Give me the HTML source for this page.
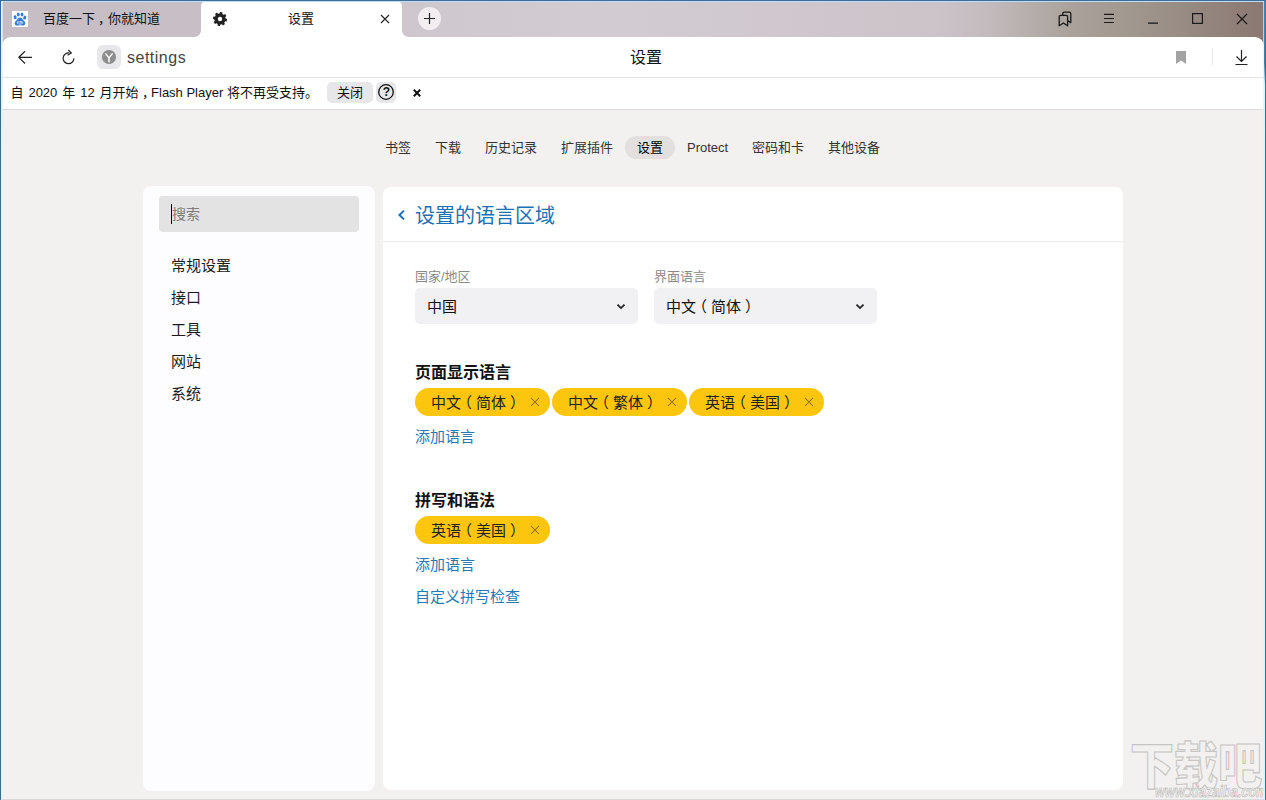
<!DOCTYPE html>
<html lang="zh-CN">
<head>
<meta charset="utf-8">
<title>设置</title>
<style>
*{box-sizing:border-box;margin:0;padding:0}
html,body{width:1266px;height:800px;overflow:hidden}
body{position:relative;background:#f2f1ef;font-family:"Liberation Sans","Noto Sans CJK SC",sans-serif;color:#000;font-size:14px}
.abs{position:absolute}
.t{position:absolute;white-space:nowrap;line-height:1}
#titlebar{left:0;top:0;width:1266px;height:45px;background:linear-gradient(90deg,#c7bec5 0px,#c8bfc6 200px,#cfc8cf 450px,#d2ccd2 600px,#cfc7cd 800px,#cbc3c8 940px,#c3babd 990px,#b6aeab 1030px,#aaa29b 1070px,#a29a91 1120px,#988c84 1180px,#908079 1230px,#8a7771 1266px)}
#tab1{left:2px;top:2px;width:199px;height:35px;background:transparent}
#tab2{left:201px;top:1px;width:201px;height:37px;background:#fff;border-radius:5px 5px 0 0}
#toolbar{left:2px;top:37px;width:1262px;height:41px;background:#fff;border-radius:9px 9px 0 0;border-bottom:1px solid #e4e4e4}
#infobar{left:2px;top:78px;width:1262px;height:32px;background:#fff;border-bottom:1px solid #dcdcdc}
#bl{left:0;top:0;width:1px;height:800px;background:linear-gradient(180deg,#2f6aa0 0,#356c96 60px,#3d6e88 140px,#3d6e88 100%)}
#bl2{left:1px;top:1px;width:2px;height:798px;background:linear-gradient(90deg,#d6f5ff 0,#d6f5ff 50%,rgba(228,240,250,.7) 50%)}
#bt{left:0;top:0;width:1266px;height:1px;background:#3e6e98}
#bt2{left:1px;top:1px;width:1264px;height:1px;background:#bcdcf8}
#br{left:1265px;top:0;width:1px;height:800px;background:linear-gradient(180deg,#3f78aa 0,#3d7096 60px,#3d6e88 140px,#3d6e88 100%)}
#br2{left:1263px;top:1px;width:1px;height:798px;background:rgba(228,240,250,.7)}
#br3{left:1264px;top:1px;width:1px;height:798px;background:linear-gradient(180deg,#4a86b5 0,#47809f 62px,#d6f5ff 84px,#d6f5ff 100%)}
#bb{left:2px;top:799px;width:1262px;height:1px;background:#dbdada}
#side{left:143px;top:186px;width:232px;height:605px;background:#fdfcfe;border-radius:8px}
#main{left:383px;top:187px;width:740px;height:603px;background:#fff;border-radius:8px}

.tx13{font-size:13px}
svg{position:absolute;overflow:visible}
#tabtxt1{left:43px;top:12px;font-size:13px;color:#111}
#tabtxt2{left:288px;top:12px;font-size:13px;color:#111}
#plus{left:418px;top:7px;width:23px;height:23px;border-radius:50%;background:#f1edf1}
#ybox{left:97px;top:45px;width:24px;height:24px;border-radius:6px;background:#e8e7e9}
#urltxt{left:127px;top:50px;font-size:16px;letter-spacing:.5px;color:#444}
#pgtitle{left:630px;top:50px;font-size:16px;color:#111}
#sep{left:1212px;top:48px;width:1px;height:17px;background:#e8e8e8}
#infotxt{left:10.5px;top:86px;font-size:13px;color:#111;word-spacing:1.3px}
#btnclose{left:327px;top:82px;width:46px;height:21px;border-radius:5px;background:#e7e6e8}
#btnclosetxt{left:337px;top:86px;font-size:13px;color:#111}
#btnq{left:376px;top:82px;width:20px;height:21px;border-radius:5px;background:#e7e6e8}
#qmark{left:382px;top:86px;font-size:12px;font-weight:bold;color:#111;width:9px;text-align:center}

.nav{font-size:13px;color:#333;top:141px}
#navpill{left:625px;top:136px;width:50px;height:23px;border-radius:12px;background:#e1e0df}
#search{left:159px;top:196px;width:200px;height:36px;border-radius:4px;background:#e4e3e3}
#caret{left:171px;top:204px;width:1px;height:20px;background:#000}
#searchtxt{left:172px;top:207px;font-size:14px;color:#7d7d7d}
.si{left:171px;font-size:15px;color:#1c1c1c}
#h1{left:415px;top:206px;font-size:20px;color:#1a71b4}
#divider{left:383px;top:241px;width:740px;height:1px;background:#ebebeb}
.lbl{font-size:13px;color:#8a8a8a;top:270px}
.sel{top:288px;width:223px;height:36px;border-radius:5px;background:#f1f0f2}
.seltxt{font-size:15px;color:#111;top:299px}
.h2{left:415px;font-size:16px;font-weight:bold;color:#111}
.chip{height:28px;border-radius:14px;background:#fcc60e}
.chiptxt{font-size:15px;color:#222}
.po{position:relative;left:-4px}.pc{position:relative;left:4px}
.lnk{left:415px;font-size:15px;color:#2a78b3}

#wm1{left:1130px;top:737px;font-size:44px;font-weight:900;color:#f2f1ef;-webkit-text-stroke:1px #c6c5c4;letter-spacing:0px;transform-origin:0 0;transform:scale(1.0,1.14);font-family:"Noto Sans CJK SC","Liberation Sans",sans-serif}
#wm2{left:1155px;top:784px;font-size:16px;font-weight:bold;font-style:italic;color:#f2f1ef;-webkit-text-stroke:0.7px #bdbcbb;transform-origin:0 0;transform:scale(0.8,1)}
</style>
</head>
<body>
<div id="titlebar" class="abs"></div>
<div id="tab1" class="abs"></div>
<div id="tab2" class="abs"></div>
<div id="toolbar" class="abs"></div>
<div id="infobar" class="abs"></div>

<!-- tab strip -->
<svg id="fav" style="left:12px;top:11px" width="16" height="16" viewBox="0 0 16 16">
<rect width="16" height="16" fill="#fff"/>
<ellipse cx="3.2" cy="6.3" rx="1.5" ry="2" fill="#3a7bd8" transform="rotate(-15 3.2 6.3)"/>
<ellipse cx="6.2" cy="3.5" rx="1.4" ry="2" fill="#3a7bd8"/>
<ellipse cx="10" cy="3.5" rx="1.4" ry="2" fill="#3a7bd8"/>
<ellipse cx="12.8" cy="6.6" rx="1.5" ry="2" fill="#3a7bd8" transform="rotate(15 12.8 6.6)"/>
<path d="M8 6.6c1.6 0 2.4 1.4 3.4 2.6 1 1.1 2.3 1.8 1.9 3.6-.4 1.7-2 1.8-3 1.7-.9-.1-1.500-.3-2.300-.3s-1.500.3-2.500.4c-1.200.1-2.500-.3-2.800-1.800-.3-1.700.9-2.500 1.900-3.500C5.600 8.100 6.300 6.600 8 6.600z" fill="#3a7bd8"/>
<ellipse cx="8" cy="11.7" rx="3.2" ry="1.7" fill="#dbe8fa"/>
<text x="8" y="13.1" font-size="4" font-weight="bold" text-anchor="middle" fill="#3a7bd8" font-family="Liberation Sans, sans-serif">du</text>
</svg>
<div id="tabtxt1" class="t">百度一下<span style="position:relative;left:3px">，</span>你就知道</div>
<svg style="left:194px;top:30px" width="7" height="7" viewBox="0 0 7 7"><path d="M0 7h7V0C7 4 4 7 0 7z" fill="#fff"/></svg>
<svg style="left:402px;top:30px" width="7" height="7" viewBox="0 0 7 7"><path d="M7 7H0V0c0 4 3 7 7 7z" fill="#fff"/></svg>
<svg style="left:213px;top:12px" width="14" height="14" viewBox="0 0 14 14"><path fill-rule="evenodd" fill="#222" d="M12.58 6.57 L14.10 7.01 L13.68 9.42 L12.10 9.31 L11.25 10.64 L12.01 12.03 L10.01 13.43 L8.97 12.24 L7.43 12.58 L6.99 14.10 L4.58 13.68 L4.69 12.10 L3.36 11.25 L1.97 12.01 L0.57 10.01 L1.76 8.97 L1.42 7.43 L-0.10 6.99 L0.32 4.58 L1.90 4.69 L2.75 3.36 L1.99 1.97 L3.99 0.57 L5.03 1.76 L6.57 1.42 L7.01 -0.10 L9.42 0.32 L9.31 1.90 L10.64 2.75 L12.03 1.99 L13.43 3.99 L12.24 5.03Z M7 4.800a2.200 2.200 0 1 0 0 4.400a2.200 2.200 0 1 0 0-4.400z"/></svg>
<div id="tabtxt2" class="t">设置</div>
<svg style="left:381px;top:15px" width="8" height="8" viewBox="0 0 8 8"><path d="M0 0L8 8M8 0L0 8" stroke="#222" stroke-width="1.100" fill="none"/></svg>
<div id="plus" class="abs"></div>
<svg style="left:424px;top:13px" width="11" height="11" viewBox="0 0 11 11"><path d="M5.500 0V11M0 5.500H11" stroke="#222" stroke-width="1.200" fill="none"/></svg>
<!-- window controls -->
<svg style="left:1058px;top:11px" width="14" height="16" viewBox="0 0 14 16"><path d="M4.800 4.400V2.700Q4.800 1.200 6.300 1.200H11.300Q12.800 1.200 12.800 2.700V11.600L9.600 9.600M9.600 14.800V5.900Q9.600 4.400 8.100 4.400H2.700Q1.200 4.400 1.200 5.900V14.800L5.400 12L9.600 14.800z" stroke="#1a1a1a" stroke-width="1.300" fill="none" stroke-linejoin="round"/></svg>
<svg style="left:1104px;top:13px" width="10" height="11" viewBox="0 0 10 11"><path d="M0 1.400H10M0 5.500H10M0 9.500H10" stroke="#1a1a1a" stroke-width="1.200" fill="none"/></svg>
<svg style="left:1148px;top:22px" width="10" height="2" viewBox="0 0 10 2"><path d="M0 1.150H10" stroke="#1a1a1a" stroke-width="1.300"/></svg>
<svg style="left:1192px;top:13px" width="11" height="11" viewBox="0 0 11 11"><rect x="0.600" y="0.600" width="9.800" height="9.800" stroke="#1a1a1a" stroke-width="1.200" fill="none"/></svg>
<svg style="left:1237px;top:14px" width="10" height="10" viewBox="0 0 10 10"><path d="M0 0L10 10M10 0L0 10" stroke="#1a1a1a" stroke-width="1.200" fill="none"/></svg>
<!-- toolbar -->
<svg style="left:18px;top:51px" width="14" height="13" viewBox="0 0 14 13"><path d="M14 6.300H0.800M7 0.300L0.800 6.300L7 12.500" stroke="#222" stroke-width="1.200" fill="none"/></svg>
<svg style="left:62px;top:49px" width="13" height="16" viewBox="0 0 13 16"><path d="M11.900 9.300A5.400 5.400 0 1 1 7.500 4" stroke="#222" stroke-width="1.200" fill="none"/><path d="M6.300 0.800L9.300 4L5.600 6.300" stroke="#222" stroke-width="1.200" fill="none"/></svg>
<div id="ybox" class="abs"></div>
<svg style="left:102px;top:50px" width="14" height="14" viewBox="0 0 14 14"><circle cx="7" cy="7" r="7.100" fill="#8e8e8e"/><path d="M3.400 3.400L7 7.900L10.600 3.400M7 7.700V12.300" stroke="#fff" stroke-width="1.500" fill="none"/></svg>
<div id="urltxt" class="t">settings</div>
<div id="pgtitle" class="t">设置</div>
<svg style="left:1176px;top:51px" width="10" height="13" viewBox="0 0 10 13"><path d="M0 0H10V13L5 9.500L0 13z" fill="#a3a3a3"/></svg>
<div id="sep" class="abs"></div>
<svg style="left:1235px;top:50px" width="13" height="15" viewBox="0 0 13 15"><path d="M6.500 0V11.500M1.500 6.500L6.500 11.500L11.500 6.500M0.500 14.500H12.500" stroke="#222" stroke-width="1.200" fill="none"/></svg>
<!-- infobar -->
<div id="infotxt" class="t">自 2020 年 12 月开始<span style="margin-left:3.5px;margin-right:-4px">，</span><span style="word-spacing:0">Flash Player 将不再受支持。</span></div>
<div id="btnclose" class="abs"></div>
<div id="btnclosetxt" class="t">关闭</div>
<div id="btnq" class="abs"></div>
<svg style="left:378px;top:84px" width="16" height="16" viewBox="0 0 16 16"><circle cx="8" cy="8" r="7.300" stroke="#111" stroke-width="1.300" fill="none"/></svg>
<div id="qmark" class="t">?</div>
<svg style="left:413px;top:89px" width="8" height="8" viewBox="0 0 8 8"><path d="M0.800 0.800L7.200 7.200M7.200 0.800L0.800 7.200" stroke="#111" stroke-width="2" fill="none"/></svg>
<div id="side" class="abs"></div>
<div id="main" class="abs"></div>

<!-- page nav -->
<div id="navpill" class="abs"></div>
<div class="t nav" style="left:385px">书签</div>
<div class="t nav" style="left:435px">下载</div>
<div class="t nav" style="left:485px">历史记录</div>
<div class="t nav" style="left:561px">扩展插件</div>
<div class="t nav" style="left:637px;color:#000">设置</div>
<div class="t nav" style="left:687px">Protect</div>
<div class="t nav" style="left:752px">密码和卡</div>
<div class="t nav" style="left:828px">其他设备</div>

<div id="search" class="abs"></div>
<div id="caret" class="abs"></div>
<div id="searchtxt" class="t">搜索</div>
<div class="t si" style="top:258px">常规设置</div>
<div class="t si" style="top:290px">接口</div>
<div class="t si" style="top:322px">工具</div>
<div class="t si" style="top:354px">网站</div>
<div class="t si" style="top:386px">系统</div>

<svg style="left:398px;top:210px" width="7" height="10" viewBox="0 0 7 10"><path d="M6 0.600L1.400 5L6 9.400" stroke="#1a71b4" stroke-width="2" fill="none"/></svg>
<div id="h1" class="t">设置的语言区域</div>
<div id="divider" class="abs"></div>
<div class="t lbl" style="left:415px">国家/地区</div>
<div class="t lbl" style="left:654px">界面语言</div>
<div class="abs sel" style="left:415px"></div>
<div class="abs sel" style="left:654px"></div>
<div class="t seltxt" style="left:427px">中国</div>
<div class="t seltxt" style="left:666px">中文<span class="po">（</span>简体<span class="pc">）</span></div>
<svg style="left:617px;top:304px" width="8" height="5" viewBox="0 0 8 5"><path d="M0.500 0.600L4 4.100L7.500 0.600" stroke="#222" stroke-width="1.800" fill="none"/></svg><svg style="left:856px;top:304px" width="8" height="5" viewBox="0 0 8 5"><path d="M0.500 0.600L4 4.100L7.500 0.600" stroke="#222" stroke-width="1.800" fill="none"/></svg>
<div class="t h2" style="top:365px">页面显示语言</div>
<div class="abs chip" style="left:415px;top:388px;width:135px"></div>
<div class="abs chip" style="left:552px;top:388px;width:135px"></div>
<div class="abs chip" style="left:689px;top:388px;width:135px"></div>
<div class="t chiptxt" style="left:431px;top:395px">中文<span class="po">（</span>简体<span class="pc">）</span></div>
<div class="t chiptxt" style="left:568px;top:395px">中文<span class="po">（</span>繁体<span class="pc">）</span></div>
<div class="t chiptxt" style="left:705px;top:395px">英语<span class="po">（</span>美国<span class="pc">）</span></div>
<svg style="left:531px;top:398px" width="8" height="8" viewBox="0 0 8 8"><path d="M0 0L8 8M8 0L0 8" stroke="#80692a" stroke-width="1.050" fill="none"/></svg><svg style="left:668px;top:398px" width="8" height="8" viewBox="0 0 8 8"><path d="M0 0L8 8M8 0L0 8" stroke="#80692a" stroke-width="1.050" fill="none"/></svg><svg style="left:805px;top:398px" width="8" height="8" viewBox="0 0 8 8"><path d="M0 0L8 8M8 0L0 8" stroke="#80692a" stroke-width="1.050" fill="none"/></svg>
<div class="t lnk" style="top:429px">添加语言</div>
<div class="t h2" style="top:493px">拼写和语法</div>
<div class="abs chip" style="left:415px;top:516px;width:135px"></div>
<div class="t chiptxt" style="left:431px;top:523px">英语<span class="po">（</span>美国<span class="pc">）</span></div>
<svg style="left:531px;top:526px" width="8" height="8" viewBox="0 0 8 8"><path d="M0 0L8 8M8 0L0 8" stroke="#80692a" stroke-width="1.050" fill="none"/></svg>
<div class="t lnk" style="top:557px">添加语言</div>
<div class="t lnk" style="top:589px">自定义拼写检查</div>

<div id="wm1" class="t">下载吧</div>
<div id="wm2" class="t">www.xiazaiba.com</div>
<div id="bt" class="abs"></div><div id="bt2" class="abs"></div>
<div id="bl" class="abs"></div><div id="bl2" class="abs"></div>
<div id="br2" class="abs"></div><div id="br3" class="abs"></div><div id="br" class="abs"></div><div id="bb" class="abs"></div>
</body>
</html>
